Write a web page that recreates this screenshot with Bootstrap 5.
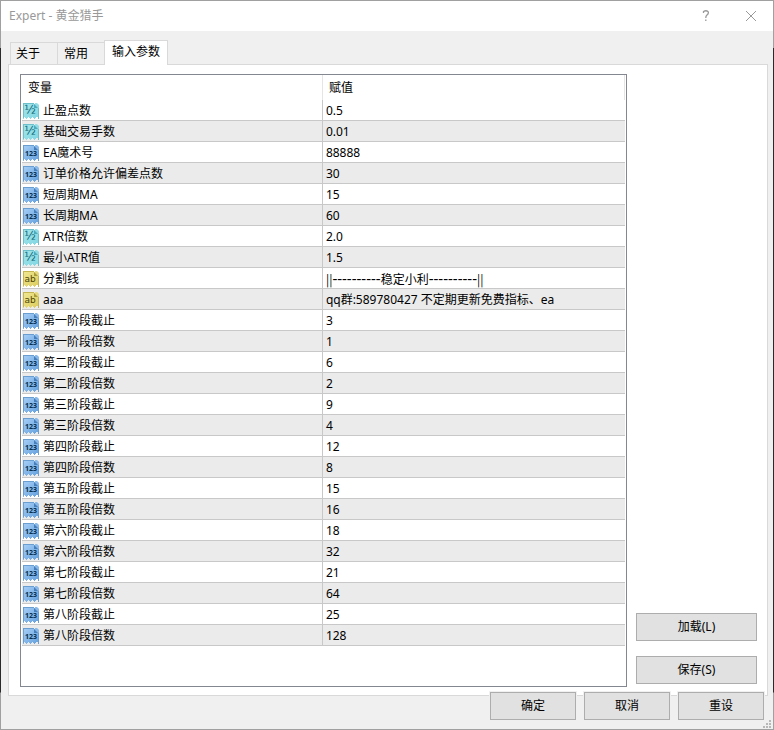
<!DOCTYPE html>
<html lang="zh-CN">
<head>
<meta charset="utf-8">
<meta name="viewport" content="width=device-width, initial-scale=1">
<title>Expert - 黄金猎手</title>
<link href="https://cdn.jsdelivr.net/npm/bootstrap@5.3.0/dist/css/bootstrap.min.css" rel="stylesheet">
<style>
body { font-family: "Noto Sans", "Noto Sans CJK SC", sans-serif; font-size: 12px; line-height: 16px; color: #000; }
.desktop { padding: 1px; background: linear-gradient(#a0a0a0 48px, #2b2b2b 48px, #2b2b2b calc(100% - 38px), #a0a0a0 calc(100% - 37px)); }
.dialog { background: #f0f0f0; }
.titlebar { height: 30px; padding: 0 8px; color: #999; }
.title-btn { width: 45px; color: #999; }
.tab-strip { padding: 9px 9px 0; margin-bottom: -1px; border: 0; position: relative; z-index: 1; }
.tab-strip .nav-link { height: 22px; margin: 0 0 1px; padding: 0 17px 0 5px; color: #000; background: #f0f0f0; border: 1px solid #d9d9d9; border-width: 1px 0 0 1px; border-radius: 0; }
.tab-strip .nav-link + .nav-link { padding: 0 16px 0 6px; }
.tab-strip .nav-link.active { height: 25px; margin: 0; padding: 0 7px 2px; color: #000; background: #fff; border-width: 1px 1px 0; border-color: #d9d9d9; }
.pane { margin: 0 5px 0 7px; padding: 9px 10px 8px 11px; background: #fff; border: 1px solid #d9d9d9; }
.grid-box { border: 1px solid #828790; padding: 0 1px; margin-right: 9px; }
.params { table-layout: fixed; border-collapse: separate; border-spacing: 0; font-size: 12px; color: #000; margin: 0; }
.params > thead > tr > th { height: 25px; padding: 0 6px; font-weight: 400; border: 0; border-right: 1px solid #e5e5e5; vertical-align: middle; }
.params > thead > tr > th:first-child { width: 49.9%; }
.params > tbody > tr > td { height: 21px; padding: 1px 3px 0; line-height: 16px; border: 0; border-bottom: 1px solid #c8c8c8; vertical-align: middle; color: #000; box-shadow: none; white-space: nowrap; }
.params > tbody > tr > td:first-child { border-right: 1px solid #c8c8c8; padding-left: 1px; }
.params > tbody > tr:nth-child(even) > td { background: #ebebeb; }
.type-icon { display: inline-block; position: relative; z-index: 0; width: 16px; height: 16px; margin-right: 4px; vertical-align: top; text-align: center; font: 700 7px/18px "Noto Sans", sans-serif; color: #06304f; }
.type-icon svg { position: absolute; left: 0; top: 0; z-index: -1; width: 16px; height: 16px; }
.real-type { font: 400 12px/14px "DejaVu Sans", sans-serif; color: #0d6674; padding-right: 2px; }
.string-type { font: 400 9px/17px "DejaVu Sans", sans-serif; color: #4d4408; padding-right: 2px; }
.rule-dash { font-size: 15px; }
.rule-bar { font-family: "Noto Sans CJK SC", sans-serif; }
.side { width: 121px; gap: 15px; padding-bottom: 3px; }
.win-btn { height: 28px; padding: 0 4px; font-size: 12px; line-height: 16px; color: #000; background: #e1e1e1; border: 1px solid #adadad; border-radius: 0; }
.win-btn:hover { background: #e5f1fb; border-color: #0078d7; color: #000; }
.actions { margin-top: -4px; padding: 0 9px 9px; gap: 8px; position: relative; }
.actions .win-btn { width: 86px; box-shadow: 0 0 0 1px #f0f0f0; }
.grip { position: absolute; right: 2px; bottom: 1px; }
</style>
<script src="https://cdn.jsdelivr.net/npm/bootstrap@5.3.0/dist/js/bootstrap.bundle.min.js" defer></script>
</head>
<body>
<svg width="0" height="0" class="position-absolute" aria-hidden="true">
  <defs>
    <linearGradient id="gc" x1="0" y1="0" x2="1" y2="1"><stop offset="0" stop-color="#a4e6ec"/><stop offset="1" stop-color="#7fd6e2"/></linearGradient>
    <linearGradient id="gb" x1="0" y1="0" x2="1" y2="1"><stop offset="0" stop-color="#a8d0f8"/><stop offset="1" stop-color="#629fdc"/></linearGradient>
    <linearGradient id="gy" x1="0" y1="0" x2="1" y2="1"><stop offset="0" stop-color="#f0e894"/><stop offset="1" stop-color="#dccb5a"/></linearGradient>
    <path id="sheet" d="M0 0h11v1h1V0h2l2 2v14h-1v-2h-2v1h-1v1h-1v-1h-1v-1H9v1H8v1H7v-1H6v-1H5v1H4v1H3v-1H2v-1H1v2H0z"/>
    <path id="fold" d="M11 1v4h4l1-1V2z"/>
    <path id="rim" d="M0 0h11v1H1v14H0zM15 5h1v11h-1z"/>
  </defs>
  <symbol id="real" viewBox="0 0 16 16">
    <use href="#sheet" fill="url(#gc)"/><use href="#rim" fill="#6cc0cc"/><use href="#fold" fill="#8fdae4"/><path d="M11 1v4h4z" fill="#4fa9b8"/>
  </symbol>
  <symbol id="whole" viewBox="0 0 16 16">
    <use href="#sheet" fill="url(#gb)"/><use href="#rim" fill="#6a9dd0"/><use href="#fold" fill="#8ab9ea"/><path d="M11 1v4h4z" fill="#477fba"/>
  </symbol>
  <symbol id="string" viewBox="0 0 16 16">
    <use href="#sheet" fill="url(#gy)"/><use href="#rim" fill="#c4b550"/><use href="#fold" fill="#e4d880"/><path d="M11 1v4h4z" fill="#a99a3a"/>
  </symbol>
</svg>
<div class="desktop min-vh-100 d-flex flex-column">
  <main class="dialog flex-grow-1 d-flex flex-column">
    <header class="titlebar bg-white d-flex align-items-center justify-content-between pe-0">
      <span>Expert - 黄金猎手</span>
      <div class="d-flex h-100">
        <button type="button" class="title-btn btn p-0 border-0 rounded-0 d-flex align-items-center justify-content-center" aria-label="帮助"><svg width="8" height="12" viewBox="0 0 8 12" fill="none" stroke="currentColor" stroke-width="1.3"><path d="M1.500 3V1.500Q4 0 6 1.500Q7.200 3.500 4.500 5.500Q3.800 6.200 3.800 8M3.800 9.500V11"/></svg></button>
        <button type="button" class="title-btn btn p-0 border-0 rounded-0 d-flex align-items-center justify-content-center" aria-label="关闭"><svg width="12" height="12" viewBox="0 0 12 12" stroke="currentColor"><path d="M1 1l10 10M11 1L1 11"/></svg></button>
      </div>
    </header>
    <nav class="tab-strip nav nav-tabs align-items-end" role="tablist">
      <button type="button" class="nav-link" role="tab">关于</button>
      <button type="button" class="nav-link" role="tab">常用</button>
      <button type="button" class="nav-link active" role="tab" aria-selected="true">输入参数</button>
    </nav>
    <section class="pane flex-grow-1 d-flex">
      <div class="grid-box flex-grow-1">
        <table class="params table">
          <thead><tr><th scope="col">变量</th><th scope="col">赋值</th></tr></thead>
          <tbody>
            <tr><td><span class="type-icon real-type"><svg><use href="#real"/></svg>½</span>止盈点数</td><td>0.5</td></tr>
            <tr><td><span class="type-icon real-type"><svg><use href="#real"/></svg>½</span>基础交易手数</td><td>0.01</td></tr>
            <tr><td><span class="type-icon"><svg><use href="#whole"/></svg>123</span>EA魔术号</td><td>88888</td></tr>
            <tr><td><span class="type-icon"><svg><use href="#whole"/></svg>123</span>订单价格允许偏差点数</td><td>30</td></tr>
            <tr><td><span class="type-icon"><svg><use href="#whole"/></svg>123</span>短周期MA</td><td>15</td></tr>
            <tr><td><span class="type-icon"><svg><use href="#whole"/></svg>123</span>长周期MA</td><td>60</td></tr>
            <tr><td><span class="type-icon real-type"><svg><use href="#real"/></svg>½</span>ATR倍数</td><td>2.0</td></tr>
            <tr><td><span class="type-icon real-type"><svg><use href="#real"/></svg>½</span>最小ATR值</td><td>1.5</td></tr>
            <tr><td><span class="type-icon string-type"><svg><use href="#string"/></svg>ab</span>分割线</td><td><span class="rule-bar">||</span><span class="rule-dash">----------</span>稳定小利<span class="rule-dash">----------</span><span class="rule-bar">||</span></td></tr>
            <tr><td><span class="type-icon string-type"><svg><use href="#string"/></svg>ab</span>aaa</td><td>qq群:589780427 不定期更新免费指标、ea</td></tr>
            <tr><td><span class="type-icon"><svg><use href="#whole"/></svg>123</span>第一阶段截止</td><td>3</td></tr>
            <tr><td><span class="type-icon"><svg><use href="#whole"/></svg>123</span>第一阶段倍数</td><td>1</td></tr>
            <tr><td><span class="type-icon"><svg><use href="#whole"/></svg>123</span>第二阶段截止</td><td>6</td></tr>
            <tr><td><span class="type-icon"><svg><use href="#whole"/></svg>123</span>第二阶段倍数</td><td>2</td></tr>
            <tr><td><span class="type-icon"><svg><use href="#whole"/></svg>123</span>第三阶段截止</td><td>9</td></tr>
            <tr><td><span class="type-icon"><svg><use href="#whole"/></svg>123</span>第三阶段倍数</td><td>4</td></tr>
            <tr><td><span class="type-icon"><svg><use href="#whole"/></svg>123</span>第四阶段截止</td><td>12</td></tr>
            <tr><td><span class="type-icon"><svg><use href="#whole"/></svg>123</span>第四阶段倍数</td><td>8</td></tr>
            <tr><td><span class="type-icon"><svg><use href="#whole"/></svg>123</span>第五阶段截止</td><td>15</td></tr>
            <tr><td><span class="type-icon"><svg><use href="#whole"/></svg>123</span>第五阶段倍数</td><td>16</td></tr>
            <tr><td><span class="type-icon"><svg><use href="#whole"/></svg>123</span>第六阶段截止</td><td>18</td></tr>
            <tr><td><span class="type-icon"><svg><use href="#whole"/></svg>123</span>第六阶段倍数</td><td>32</td></tr>
            <tr><td><span class="type-icon"><svg><use href="#whole"/></svg>123</span>第七阶段截止</td><td>21</td></tr>
            <tr><td><span class="type-icon"><svg><use href="#whole"/></svg>123</span>第七阶段倍数</td><td>64</td></tr>
            <tr><td><span class="type-icon"><svg><use href="#whole"/></svg>123</span>第八阶段截止</td><td>25</td></tr>
            <tr><td><span class="type-icon"><svg><use href="#whole"/></svg>123</span>第八阶段倍数</td><td>128</td></tr>
          </tbody>
        </table>
      </div>
      <div class="side d-flex flex-column justify-content-end flex-shrink-0">
        <button type="button" class="win-btn btn">加载(L)</button>
        <button type="button" class="win-btn btn">保存(S)</button>
      </div>
    </section>
    <footer class="actions d-flex justify-content-end">
      <button type="button" class="win-btn btn">确定</button>
      <button type="button" class="win-btn btn">取消</button>
      <button type="button" class="win-btn btn">重设</button>
      <svg class="grip" width="8" height="8" fill="#b8b8b8" aria-hidden="true"><path d="M6 0h2v2H6zM3 3h2v2H3zM6 3h2v2H6zM0 6h2v2H0zM3 6h2v2H3zM6 6h2v2H6z"/></svg>
    </footer>
  </main>
</div>
</body>
</html>
